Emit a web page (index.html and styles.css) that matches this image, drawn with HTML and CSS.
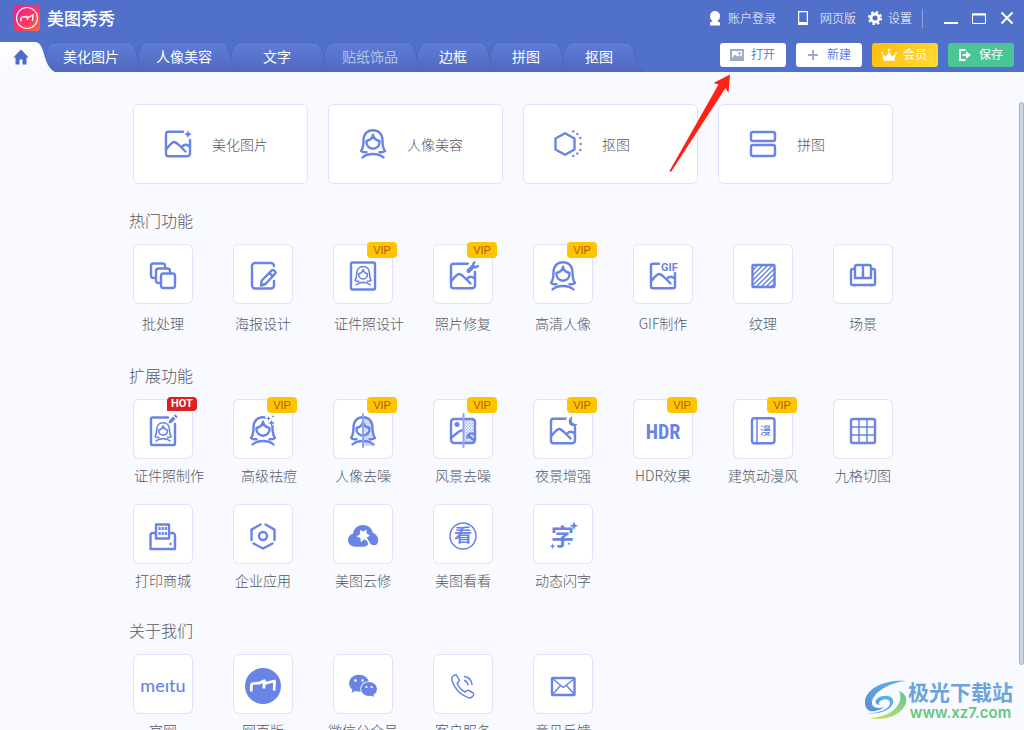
FILE: index.html
```html
<!DOCTYPE html>
<html lang="zh-CN">
<head>
<meta charset="utf-8">
<meta name="viewport" content="width=device-width, initial-scale=1">
<title>美图秀秀</title>
<link rel="stylesheet" href="styles.css">
</head>
<body>
<svg class="defs" aria-hidden="true">
  <defs>
    <linearGradient id="g-tab" x1="0" y1="0" x2="0" y2="1"><stop offset="0" stop-color="#5f7dd8"/><stop offset="1" stop-color="#4f69bd"/></linearGradient>
    <linearGradient id="g-home" x1="0" y1="0" x2="0" y2="1"><stop offset="0" stop-color="#fff"/><stop offset="1" stop-color="#f8faff"/></linearGradient>
    <linearGradient id="g-logo" x1="0" y1="0" x2="1" y2="1"><stop offset="0" stop-color="#fb1c8e"/><stop offset=".55" stop-color="#fd3563"/><stop offset="1" stop-color="#fd6a3c"/></linearGradient>
    <linearGradient id="g-blue" x1="0" y1="1" x2="1" y2="0"><stop offset="0" stop-color="#5b8ed6"/><stop offset="1" stop-color="#5cb8e8"/></linearGradient>
    <linearGradient id="g-green" x1="0" y1="1" x2="1" y2="0"><stop offset="0" stop-color="#d9e45c"/><stop offset="1" stop-color="#5cc791"/></linearGradient>
    <pattern id="p-dots" width="3" height="3" patternUnits="userSpaceOnUse"><rect width="3" height="3" fill="#e6ebfc"/><rect width="1" height="1" fill="#8fa4ee"/><rect x="1.500" y="1.500" width="1" height="1" fill="#8fa4ee"/></pattern>
  </defs>
  <symbol id="tab-wide" viewBox="0 0 93 30"><path d="M10 .5H83c5 0 7 5 9 12 2 8 4 14 10 17.500H6C1 25 0 16 0 14 2 6 4 .5 10 .5z"/></symbol>
  <symbol id="tab-narrow" viewBox="0 0 73 30"><path d="M10 .5H63c5 0 7 5 9 12 2 8 4 14 10 17.500H6C1 25 0 16 0 14 2 6 4 .5 10 .5z"/></symbol>
  <symbol id="woman" viewBox="0 0 60 60">
    <path d="M23.500 40.200c-2.200.3-4.500-.2-5.500-1.200 2.200-3 2.500-5.500 2.500-10.500C20.500 22 24.500 18.200 30 18.200s9.500 3.800 9.500 10.300c0 5 .3 7.500 2.500 10.500-1 1-3.300 1.500-5.500 1.200"/>
    <path d="M30 22.800c-.6 3.200-3 5.400-6.500 6.200v1.600a6.500 6.200 0 0 0 13 0V29c-3.500-.8-5.900-3-6.500-6.200z"/>
    <path d="M19.500 45.500c5-4.700 16-4.700 21 0"/>
  </symbol>
  <symbol id="scene" viewBox="0 0 60 60">
    <path d="M35 19.800H20.500A2.500 2.500 0 0 0 18 22.300v19.400a2.500 2.500 0 0 0 2.500 2.500h19a2.500 2.500 0 0 0 2.500-2.500V28"/>
    <path d="M18 37.500c3.500-4.500 6-7.500 8-7.500s4 2 6 4l5.500 5.500M33.500 35.500c2.500-3.500 6-3.500 8.500-.5"/>
  </symbol>
</svg>

<header class="header">
  <div class="titlebar">
    <div class="brand">
      <svg class="brand-logo" viewBox="0 0 26 26" aria-hidden="true"><rect width="26" height="26" rx="4" fill="url(#g-logo)"/><circle cx="13" cy="13" r="10.500" fill="none" stroke="#fff" stroke-width="1.200"/><path d="M7 16.500v-3.200c0-1 .6-1.300 1.500-1.300l4-.4 1 1.200 5.500-2.800-.5 6M13.500 12.500v2.500" fill="none" stroke="#fff" stroke-width="1.400"/></svg>
      <span>美图秀秀</span>
    </div>
    <nav class="account">
      <a href="#" class="item"><svg viewBox="0 0 14 16" class="ico" aria-hidden="true"><path d="M7 1a5 5 0 0 0-5 5c0 2.500 1.200 4.300 2.800 5L2 12.500V15.500h10v-3L9.200 11C10.800 10.300 12 8.500 12 6a5 5 0 0 0-5-5z" fill="#fff"/></svg><span>账户登录</span></a>
      <a href="#" class="item item-web"><svg viewBox="0 0 14 16" class="ico" aria-hidden="true"><path d="M2.600 1.600h8.800v12H2.600z" fill="none" stroke="#fff" stroke-width="1.200"/><path d="M2 12h10v3H2z" fill="#fff"/></svg><span>网页版</span></a>
      <a href="#" class="item"><svg viewBox="0 0 14 16" class="ico" aria-hidden="true"><circle cx="7" cy="8" r="4" fill="none" stroke="#fff" stroke-width="2.800"/><circle cx="7" cy="8" r="6" fill="none" stroke="#fff" stroke-width="2.200" stroke-dasharray="2.400 2.312"/></svg><span>设置</span></a>
    </nav>
    <div class="window-controls">
      <button type="button" aria-label="最小化"><svg viewBox="0 0 14 14"><path d="M0 11h14v2H0z" fill="#fff"/></svg></button>
      <button type="button" aria-label="最大化"><svg viewBox="0 0 14 14"><path d="M.5 3h13v9.500H.5z" fill="none" stroke="#fff"/><path d="M0 2.500h14v2H0z" fill="#fff"/></svg></button>
      <button type="button" aria-label="关闭"><svg viewBox="0 0 14 14"><path d="M1.500 1.500l11 11M12.500 1.500l-11 11" stroke="#fff" stroke-width="2"/></svg></button>
    </div>
  </div>
  <div class="toolbar">
    <nav class="tabs">
      <a href="#" class="tab tab-home" aria-label="首页"><svg class="tab-shape home-shape" viewBox="0 0 45 30" aria-hidden="true"><path d="M0 0H35c5 0 7 5 9 12 2 8 5 15 11 18H0z"/></svg><svg class="home-icon" viewBox="0 0 16 16" aria-hidden="true"><path d="M8 .5L.3 8.500h2.200v7h4v-5h3v5h4v-7h2.200z" fill="#4c6bc4"/></svg></a>
      <a href="#" class="tab"><svg class="tab-shape"><use href="#tab-wide"/></svg><span>美化图片</span></a>
      <a href="#" class="tab"><svg class="tab-shape"><use href="#tab-wide"/></svg><span>人像美容</span></a>
      <a href="#" class="tab"><svg class="tab-shape"><use href="#tab-wide"/></svg><span>文字</span></a>
      <a href="#" class="tab tab-dim"><svg class="tab-shape"><use href="#tab-wide"/></svg><span>贴纸饰品</span></a>
      <a href="#" class="tab tab-short"><svg class="tab-shape"><use href="#tab-narrow"/></svg><span>边框</span></a>
      <a href="#" class="tab tab-short"><svg class="tab-shape"><use href="#tab-narrow"/></svg><span>拼图</span></a>
      <a href="#" class="tab tab-short"><svg class="tab-shape"><use href="#tab-narrow"/></svg><span>抠图</span></a>
    </nav>
    <div class="actions">
      <button type="button" class="action"><svg viewBox="0 0 16 14" aria-hidden="true"><path fill="#a0abc9" fill-rule="evenodd" d="M1 1h14v12H1zM3 3v7l3-3.500 2.500 2L11 7l2 2V3z"/><circle cx="10.500" cy="5.300" r="1.300" fill="#a0abc9"/></svg><span>打开</span></button>
      <button type="button" class="action"><svg viewBox="0 0 16 14" aria-hidden="true"><path d="M8 2v10M3 7h10" stroke="#a0abc9" stroke-width="2"/></svg><span>新建</span></button>
      <button type="button" class="action action-vip"><svg viewBox="0 0 16 14" aria-hidden="true"><path d="M2.500 12.800L1.300 6l3.700 2.500L8 3l3 5.500L14.700 6l-1.200 6.800z" fill="#fff"/><circle cx="8" cy="2" r="1.200" fill="#fff"/><circle cx="1" cy="5" r="1" fill="#fff"/><circle cx="15" cy="5" r="1" fill="#fff"/></svg><span>会员</span></button>
      <button type="button" class="action action-save"><svg viewBox="0 0 16 14" aria-hidden="true"><path d="M8.500 2H3v10h5.500" fill="none" stroke="#fff" stroke-width="2"/><path d="M5.500 6H9V3.200L14 7l-5 3.800V8H5.500z" fill="#fff"/></svg><span>保存</span></button>
    </div>
  </div>
</header>

<main class="content">
  <div class="page">
    <div class="cards">
      <a href="#" class="card"><svg class="icon" viewBox="0 0 60 60" aria-hidden="true"><use href="#scene"/><path class="solid" d="M40 18c.8 2.800 1.400 3.400 4 4.200-2.600.8-3.200 1.400-4 4.200-.8-2.800-1.400-3.400-4-4.200 2.600-.8 3.200-1.400 4-4.200z"/></svg><span>美化图片</span></a>
      <a href="#" class="card"><svg class="icon" viewBox="0 0 60 60" aria-hidden="true"><use href="#woman"/></svg><span>人像美容</span></a>
      <a href="#" class="card"><svg class="icon" viewBox="0 0 60 60" aria-hidden="true"><path d="M27 21.200l9.500 5.300v11L27 42.800l-9.500-5.300v-11z"/><g class="solid"><circle cx="35.300" cy="19.500" r="1.200"/><circle cx="39.300" cy="22" r="1.200"/><circle cx="42.300" cy="26" r="1.200"/><circle cx="42.700" cy="32" r="1.200"/><circle cx="42.300" cy="38" r="1.200"/><circle cx="39.300" cy="41.500" r="1.200"/><circle cx="35.300" cy="44" r="1.200"/></g></svg><span>抠图</span></a>
      <a href="#" class="card"><svg class="icon" viewBox="0 0 60 60" aria-hidden="true"><rect x="18" y="20" width="24" height="9" rx="2"/><rect x="18" y="33" width="24" height="11" rx="2"/></svg><span>拼图</span></a>
    </div>

    <section class="section section-hot">
      <h2>热门功能</h2>
      <div class="grid">
        <a href="#" class="tool"><span class="tile"><svg class="icon" viewBox="0 0 60 60"><rect x="28" y="29.500" width="14" height="14.500" rx="2.500"/><path d="M28 39h-2.500a2.500 2.500 0 0 1-2.500-2.500V27a2.500 2.500 0 0 1 2.500-2.500h9A2.500 2.500 0 0 1 37 27v2.500M23 34h-2.500a2.500 2.500 0 0 1-2.500-2.500v-9.500a2.500 2.500 0 0 1 2.500-2.500h9A2.500 2.500 0 0 1 32 22v2.500"/></svg></span><span class="label">批处理</span></a>
        <a href="#" class="tool"><span class="tile"><svg class="icon" viewBox="0 0 60 60"><path d="M41 22v0a3 3 0 0 0-3-3H22a3 3 0 0 0-3 3v19.500a3 3 0 0 0 3 3h16a3 3 0 0 0 3-3V37M28 41.500l.8-5L39 26.200c1.200-1.200 4.500 2 3.300 3.300L32.500 40zM36.500 29l3.300 3.300"/></svg></span><span class="label">海报设计</span></a>
        <a href="#" class="tool tool-shift"><span class="tile"><svg class="icon" viewBox="0 0 60 60"><rect x="18" y="18.500" width="24" height="27" rx="1.500"/><g transform="translate(10 10.300) scale(.67)"><use href="#woman"/></g></svg><em class="badge">VIP</em></span><span class="label">证件照设计</span></a>
        <a href="#" class="tool"><span class="tile"><svg class="icon" viewBox="0 0 60 60"><use href="#scene"/><path class="halo" d="M35 27l7-8"/><path class="thick" d="M35.500 27l4.500-4.500"/><path d="M41.500 18.500c-1.500 1-2 3-.7 4s3 .7 4-.5"/></svg><em class="badge">VIP</em></span><span class="label">照片修复</span></a>
        <a href="#" class="tool"><span class="tile"><svg class="icon" viewBox="0 0 60 60"><use href="#woman"/></svg><em class="badge">VIP</em></span><span class="label">高清人像</span></a>
        <a href="#" class="tool"><span class="tile"><svg class="icon" viewBox="0 0 60 60"><path d="M26 19.800h-6a2 2 0 0 0-2 2v20.400a2 2 0 0 0 2 2h20a2 2 0 0 0 2-2V29M18 37.500c3.500-4.500 6-7.500 8-7.500s4 2 6 4l5.500 5.500M33.500 35.500c2.500-3.500 6-3.500 8.500-.5"/><text class="t-gif" x="28" y="26.500">GIF</text></svg></span><span class="label">GIF制作</span></a>
        <a href="#" class="tool"><span class="tile"><svg class="icon" viewBox="0 0 60 60"><rect x="19.500" y="21" width="22" height="22" rx="1"/><path class="fine" d="M20 26l5-5M20 31l10-10M20 36l15-15M20 41l20-20M23 43l19-19M28 43l14-14M33 43l9-9M38 43l4-4"/></svg></span><span class="label">纹理</span></a>
        <a href="#" class="tool"><span class="tile"><svg class="icon" viewBox="0 0 60 60"><path d="M22 34V23a2 2 0 0 1 2-2h12a2 2 0 0 1 2 2v11zM30 21v13M22 25h-2a2 2 0 0 0-2 2v12.500a1.500 1.500 0 0 0 1.500 1.500h21a1.500 1.500 0 0 0 1.500-1.500V27a2 2 0 0 0-2-2h-2M21.500 41v.5M38.500 41v.5"/></svg></span><span class="label">场景</span></a>
      </div>
    </section>

    <section class="section">
      <h2>扩展功能</h2>
      <div class="grid">
        <a href="#" class="tool tool-shift"><span class="tile"><svg class="icon" viewBox="0 0 60 60"><path d="M35 18.500H19.500a1.500 1.500 0 0 0-1.500 1.500v24.500a1.500 1.500 0 0 0 1.500 1.500h21a1.500 1.500 0 0 0 1.500-1.500V25"/><g transform="translate(10 11.500) scale(.67)"><use href="#woman"/></g><path class="solid" d="M36 21.500l4-4 2.500 2.500-4 4-3 .5zM40.800 16.700l1.500-1.500 2.500 2.500-1.500 1.500z"/></svg><em class="badge badge-hot">HOT</em></span><span class="label">证件照制作</span></a>
        <a href="#" class="tool tool-shift"><span class="tile"><svg class="icon" viewBox="0 0 60 60"><use href="#woman"/><path class="halo" d="M36.500 18l3.500 4"/><path class="solid" d="M35.500 17l.7 1.800 1.800.7-1.800.7-.7 1.800-.7-1.800-1.800-.7 1.800-.7zM38.500 20.500l1 2.500 2.500 1-2.500 1-1 2.500-1-2.500-2.500-1 2.500-1zM40 16l.4 1.100 1.100.4-1.100.4L40 19l-.4-1.100-1.100-.4 1.100-.4z"/></svg><em class="badge">VIP</em></span><span class="label">高级祛痘</span></a>
        <a href="#" class="tool"><span class="tile"><svg class="icon" viewBox="0 0 60 60"><path d="M30 17c6 0 10 4 10 11 0 6 1 8 3 11l-6 2 4 6H30z" fill="url(#p-dots)" stroke="none"/><use href="#woman"/><path class="split" d="M30 15v33"/></svg><em class="badge">VIP</em></span><span class="label">人像去噪</span></a>
        <a href="#" class="tool"><span class="tile"><svg class="icon" viewBox="0 0 60 60"><path d="M31 20h8a3 3 0 0 1 3 3v18a3 3 0 0 1-3 3h-8z" fill="url(#p-dots)" stroke="none"/><rect x="18" y="20" width="24" height="24" rx="3"/><circle class="solid" cx="24" cy="25.500" r="2.500"/><path d="M18 39l8-6.500 4-1.500M42 35.500c-3.500-2.500-7.500-.5-7.500 3M36 37l4 3.500"/><path class="split" d="M30.500 15v33"/></svg><em class="badge">VIP</em></span><span class="label">风景去噪</span></a>
        <a href="#" class="tool"><span class="tile"><svg class="icon" viewBox="0 0 60 60"><use href="#scene"/><circle cx="39" cy="22" r="6" fill="#fff" stroke="none"/><path class="solid" d="M39.500 17.500c-2 5 .5 8 5 7.500-1.500 2.500-4.500 3-7 1.300-3-2.500-2-7.800 2-8.800z"/></svg><em class="badge">VIP</em></span><span class="label">夜景增强</span></a>
        <a href="#" class="tool"><span class="tile"><svg class="icon" viewBox="0 0 60 60"><text class="t-hdr" x="30" y="40">HDR</text></svg><em class="badge">VIP</em></span><span class="label">HDR效果</span></a>
        <a href="#" class="tool"><span class="tile"><svg class="icon" viewBox="0 0 60 60"><rect x="19" y="19.300" width="22.500" height="25" rx="2.500"/><path class="fine" d="M24 19v26"/><text class="t-man" x="32.500" y="36">漫</text></svg><em class="badge">VIP</em></span><span class="label">建筑动漫风</span></a>
        <a href="#" class="tool"><span class="tile"><svg class="icon" viewBox="0 0 60 60"><rect x="18" y="20" width="24" height="24" rx="2"/><path class="fine" d="M26 20v24M34 20v24M18 28h24M18 36h24"/></svg></span><span class="label">九格切图</span></a>
        <a href="#" class="tool"><span class="tile"><svg class="icon" viewBox="0 0 60 60"><path d="M23 34.500V20.500h13v14zM22.500 29H20a2.500 2.500 0 0 0-2.500 2.500V45h24.500V31.500a2.500 2.500 0 0 0-2.500-2.500h-3"/><path class="dash" d="M25.500 24.500h8.500M25.500 29.500h8.500"/><circle class="solid" cx="37.500" cy="40" r="1.200"/></svg></span><span class="label">打印商城</span></a>
        <a href="#" class="tool"><span class="tile"><svg class="icon" viewBox="0 0 60 60"><path d="M27.500 20.500L18.500 25.600v10.400M32.500 20.500L41.500 25.600v10.400M20.500 39.500l9.500 5 9.500-5"/><circle cx="30" cy="32" r="4"/></svg></span><span class="label">企业应用</span></a>
        <a href="#" class="tool"><span class="tile"><svg class="icon" viewBox="0 0 60 60"><path class="solid" d="M22.500 42.700c-4.500 0-7.500-3-7.500-6.700 0-3 2-5.500 5-6.200C21 24 25 21 30 21s8.500 2.800 9.700 7.500c3.500 1.500 5.500 4.500 5.500 7.800 0 3.200-1.500 5-4 5-2.700 0-4-1.500-5.200-3.500 0 3-2.500 4.900-5.500 4.900z"/><path d="M27 26l3 1.500 3.500-2 .2 4 3.300 2.200-3.300 1.500 1.500 4-4-2-3.200 3-.7-4.200-4-1.500 3.500-2z" fill="#fff" stroke="none"/><path d="M33 34l3 5" stroke="#fff" stroke-width="1.500"/></svg></span><span class="label">美图云修</span></a>
        <a href="#" class="tool"><span class="tile"><svg class="icon" viewBox="0 0 60 60"><circle class="fine" cx="30" cy="32" r="13"/><text class="t-look" x="30" y="38">看</text></svg></span><span class="label">美图看看</span></a>
        <a href="#" class="tool"><span class="tile"><svg class="icon" viewBox="0 0 60 60"><text class="t-char" x="29.500" y="41">字</text><path class="solid" d="M41 17.500l1.200 3 3 1.200-3 1.200-1.200 3-1.200-3-3-1.200 3-1.200zM19.500 39.500l.8 2 2 .8-2 .8-.8 2-.8-2-2-.8 2-.8zM36 38l.5 1.200 1.200.5-1.200.5-.5 1.200-.5-1.200-1.200-.5 1.200-.5z"/></svg></span><span class="label">动态闪字</span></a>
      </div>
    </section>

    <section class="section">
      <h2>关于我们</h2>
      <div class="grid">
        <a href="#" class="tool"><span class="tile"><svg class="icon" viewBox="0 0 60 60"><text class="t-meitu" x="30" y="38">meıtu</text></svg></span><span class="label">官网</span></a>
        <a href="#" class="tool"><span class="tile"><svg class="icon" viewBox="0 0 60 60"><circle class="solid" cx="30" cy="32" r="18"/><path class="mark" d="M18.300 37.500v-5.500c0-2 1.200-2.600 3-2.600l4.500-.2 5.500-2.500-.3 3 10.500-2.700-.3 9.500M31 30v4.500"/></svg></span><span class="label">网页版</span></a>
        <a href="#" class="tool"><span class="tile"><svg class="icon" viewBox="0 0 60 60"><ellipse class="solid" cx="26" cy="29.300" rx="10" ry="8.500"/><path class="solid" d="M20 34l-1.500 5 5-2.500z"/><ellipse cx="36" cy="35" rx="8.800" ry="7.800" fill="#fff" stroke="none"/><ellipse class="solid" cx="36" cy="35" rx="8" ry="7"/><path class="solid" d="M37 41l4 2-1-4z"/><g fill="#fff" stroke="none"><circle cx="22.500" cy="26.500" r="1.300"/><circle cx="29.500" cy="26.500" r="1.300"/><circle cx="33.500" cy="33" r="1.100"/><circle cx="38.700" cy="33" r="1.100"/></g></svg></span><span class="label">微信公众号</span></a>
        <a href="#" class="tool"><span class="tile"><svg class="icon" viewBox="0 0 60 60"><path class="fine" d="M19.500 22.500l2-1.500c1-.6 1.700-.2 2.200.6l2.300 4c.5 1 .2 1.700-.5 2.300l-1.300 1.300c1.500 4 4.300 7 8 8.800l1.600-1.300c.7-.6 1.500-.7 2.300-.2l3.900 2.500c.8.6 1.200 1.300.6 2.200l-1.600 1.700c-1 1-2.500 1.200-4 .7C27 40.500 21.500 34 18.900 26.500c-.5-1.500-.4-3 .6-4zM31.500 26.500c2 .7 3.200 2 3.500 4.300M31.500 22.500c4.300.8 7 3.500 7.500 8"/></svg></span><span class="label">客户服务</span></a>
        <a href="#" class="tool"><span class="tile"><svg class="icon" viewBox="0 0 60 60"><rect x="19" y="24" width="22.500" height="17" rx=".5"/><path class="fine" d="M20 25l10.200 8.500L41 25M20 40l7.500-8.500M41 40l-7.500-8.500"/></svg></span><span class="label">意见反馈</span></a>
      </div>
    </section>
  </div>
  <div class="scroll-thumb"></div>
</main>

<svg class="pointer" viewBox="0 0 62 100" aria-hidden="true"><path d="M62 1.500L45.500 10l5 1.500L1.500 98l1.500 1L57.500 15l3 5z" fill="#ff2114"/></svg>

<div class="watermark">
  <svg class="watermark-logo" viewBox="0 0 42 40" aria-hidden="true"><path d="M41 1C22-1 3 7 0 20c-1 6 2 10 5 11 4 1 11-1 14-4-6 2-11 1-12-3C6 14 22 3 41 1z" fill="url(#g-blue)"/><path d="M0 33c10 1 20-2 24-7 3-5-2-8-7-6-3 1-4 4-2 5-5 0-6-4-2-7 6-4 17-3 15 5-2 7-14 12-28 10z" fill="url(#g-blue)"/><path d="M34 11c8 3 9 10 5 16C32 37 18 41 4 38c14-1 24-5 29-13 3-5 3-10 1-14z" fill="url(#g-green)"/></svg>
  <div class="watermark-text"><strong>极光下载站</strong><span>www.xz7.com</span></div>
</div>
</body>
</html>
```

FILE: styles.css
```css
* { box-sizing: border-box; }

body {
  margin: 0;
  height: 100vh;
  display: flex;
  flex-direction: column;
  overflow: hidden;
  background: #f8faff;
  color: #555864;
  font-family: "Noto Sans CJK SC", sans-serif;
  font-weight: 300;
  font-size: 14px;
  line-height: 20px;
}

a { color: inherit; text-decoration: none; }
button { margin: 0; padding: 0; border: 0; background: none; font: inherit; color: inherit; }
.defs { position: absolute; width: 0; height: 0; }

/* Header */
.header { background: #5170c9; color: #fff; flex: none; }

.titlebar { display: flex; align-items: center; height: 36px; padding: 0 10px 0 14px; }
.brand { display: flex; align-items: center; gap: 7px; margin-right: auto; font-size: 17px; font-weight: 500; }
.brand-logo { width: 26px; height: 26px; }

.account { display: flex; gap: 12px; padding-right: 10px; border-right: 1px solid #8ea2dd; font-size: 12px; line-height: 18px; }
.item { display: flex; align-items: center; gap: 6px; }
.item-web { gap: 10px; padding-left: 8px; }
.item span { padding-bottom: 1px; }
.ico { width: 14px; height: 16px; }

.window-controls { display: flex; gap: 14px; padding-left: 21px; }
.window-controls button { width: 14px; height: 14px; }
.window-controls svg { display: block; width: 14px; height: 14px; }

.toolbar { display: flex; justify-content: space-between; align-items: flex-end; height: 36px; padding-right: 10px; overflow: hidden; }
.tabs { display: flex; }
.tab { position: relative; display: flex; align-items: center; justify-content: center; width: 93px; height: 30px; font-weight: 400; }
.tab span { position: relative; padding: 0 1px 2px 0; }
.tab-short { width: 73px; }
.tab-home { width: 45px; padding-right: 4px; z-index: 1; }
.tab-dim span { color: #b4c1ea; }
.tab-shape { position: absolute; inset: 0; width: 100%; height: 100%; overflow: visible; fill: url(#g-tab); stroke: #4b68bd; stroke-width: 1; }
.tab-shape.home-shape { fill: url(#g-home); stroke: none; }
symbol { overflow: visible; }
.home-icon { position: relative; width: 16px; height: 16px; }

.actions { display: flex; gap: 10px; padding-bottom: 5px; }
.action { display: flex; align-items: center; justify-content: center; gap: 6px; width: 66px; height: 24px; padding-right: 2px; border-radius: 3px; background: #fff; color: #5f7fe0; font-size: 12px; font-weight: 400; }
.action span { padding-bottom: 2px; }
.action svg { width: 16px; height: 14px; }
.action-vip { background: linear-gradient(135deg, #ffbc0f, #ffdc35); color: #fff; }
.action-save { background: #49c596; color: #fff; }

/* Content */
.content { position: relative; flex: 1; min-height: 0; overflow: hidden; padding: 32px 0 0 2px; }
.page { max-width: 760px; margin: 0 auto; }

.cards { display: grid; grid-template-columns: repeat(4, 1fr); gap: 20px; }
.card { display: flex; align-items: center; gap: 4px; height: 80px; padding-left: 14px; border: 1px solid #e1e1fd; border-radius: 6px; background: #fff; }
.card .icon { margin-bottom: 4px; }

.icon { display: block; flex: none; width: 60px; height: 60px; fill: none; stroke: #6984e6; stroke-width: 2.4; stroke-linecap: round; stroke-linejoin: round; }
.icon .solid { fill: #6984e6; stroke: none; }
.icon .fine { stroke-width: 1.5; }
.icon .thick { stroke-width: 4; }
.icon .halo { stroke: #fff; stroke-width: 8; }
.icon .split { stroke: #8fa4ee; stroke-width: 2; }
.icon .dash { stroke-width: 3; stroke-linecap: butt; stroke-dasharray: 2.2 .9; }
.icon .mark { stroke: #fff; stroke-width: 2.8; stroke-linecap: butt; }
.icon text { fill: #6984e6; stroke: none; font-weight: 700; text-anchor: middle; }
.icon .t-gif { font: 700 11px Roboto, sans-serif; text-anchor: start; }
.icon .t-hdr { font: 700 20px "Roboto Condensed", "Liberation Sans Narrow", Roboto, sans-serif; }
.icon .t-man { font-size: 11px; font-weight: 500; }
.icon .t-look { font-size: 18px; }
.icon .t-char { font-size: 23px; }
.icon .t-meitu { font: 500 18px Lato, sans-serif; }

.section { padding-top: 28px; }
.section h2 { margin: 0 0 12px -4px; font-size: 16px; line-height: 24px; font-weight: 300; }
.section-hot { padding-top: 24px; }
.grid { display: grid; grid-template-columns: repeat(8, 60px); justify-content: space-between; row-gap: 19px; }
.tool { display: flex; flex-direction: column; align-items: center; gap: 6px; white-space: nowrap; }
.section-hot .tool { gap: 9px; }
.section-hot .grid { padding-bottom: 2px; }
.tool-shift .label { margin-left: 12px; }
.tile { position: relative; width: 60px; height: 60px; border-radius: 6px; background: #fff; box-shadow: inset 0 0 0 1px #e1e1fd; }
.label { display: block; }

.badge { position: absolute; left: 34px; top: -2px; width: 30px; height: 16px; border-radius: 4px; background: #ffc400; color: #b9560a; font: normal 400 11px/16px "Liberation Sans", sans-serif; text-align: center; }
.badge-hot { height: 14px; border-radius: 4px 4px 4px 0; background: #dc1f1f; color: #fff; font: normal 700 11px/14px Roboto, sans-serif; }

.scroll-thumb { position: absolute; top: 30px; right: 0; bottom: 65px; width: 5px; border: 1px solid #a9b2c0; border-radius: 3px; background: #cdd5e0; }

.pointer { position: absolute; left: 668px; top: 73px; width: 62px; height: 100px; }

/* Watermark */
.watermark { position: absolute; right: 11px; bottom: 8px; display: flex; align-items: center; gap: 1px; }
.watermark-logo { width: 42px; height: 40px; }
.watermark-text { display: flex; flex-direction: column; align-items: center; }
.watermark-text strong { font-size: 21px; line-height: 26px; font-weight: 700; color: #6ba3dc; }
.watermark-text span { font: 600 15px/18px Inter, sans-serif; color: #62c67c; }
```
